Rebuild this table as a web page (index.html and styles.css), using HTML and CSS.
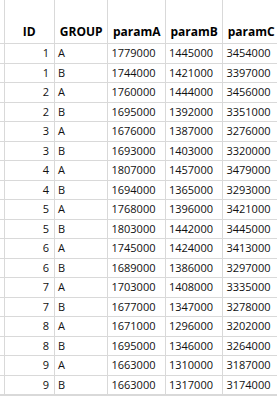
FILE: index.html
```html
<!DOCTYPE html>
<html>
<head>
<meta charset="utf-8">
<link rel="stylesheet" href="styles.css">
</head>
<body>
<table class="grid">
  <colgroup>
    <col class="c-stub"><col class="c-id"><col class="c-group"><col class="c-a"><col class="c-b"><col class="c-c">
  </colgroup>
  <thead>
    <tr><th class="stub"></th><th>ID</th><th>GROUP</th><th>paramA</th><th>paramB</th><th>paramC</th></tr>
  </thead>
  <tbody>
    <tr><td class="stub"></td><td class="num">1</td><td>A</td><td>1779000</td><td>1445000</td><td>3454000</td></tr>
    <tr><td class="stub"></td><td class="num">1</td><td>B</td><td>1744000</td><td>1421000</td><td>3397000</td></tr>
    <tr><td class="stub"></td><td class="num">2</td><td>A</td><td>1760000</td><td>1444000</td><td>3456000</td></tr>
    <tr><td class="stub"></td><td class="num">2</td><td>B</td><td>1695000</td><td>1392000</td><td>3351000</td></tr>
    <tr><td class="stub"></td><td class="num">3</td><td>A</td><td>1676000</td><td>1387000</td><td>3276000</td></tr>
    <tr><td class="stub"></td><td class="num">3</td><td>B</td><td>1693000</td><td>1403000</td><td>3320000</td></tr>
    <tr><td class="stub"></td><td class="num">4</td><td>A</td><td>1807000</td><td>1457000</td><td>3479000</td></tr>
    <tr><td class="stub"></td><td class="num">4</td><td>B</td><td>1694000</td><td>1365000</td><td>3293000</td></tr>
    <tr><td class="stub"></td><td class="num">5</td><td>A</td><td>1768000</td><td>1396000</td><td>3421000</td></tr>
    <tr><td class="stub"></td><td class="num">5</td><td>B</td><td>1803000</td><td>1442000</td><td>3445000</td></tr>
    <tr><td class="stub"></td><td class="num">6</td><td>A</td><td>1745000</td><td>1424000</td><td>3413000</td></tr>
    <tr><td class="stub"></td><td class="num">6</td><td>B</td><td>1689000</td><td>1386000</td><td>3297000</td></tr>
    <tr><td class="stub"></td><td class="num">7</td><td>A</td><td>1703000</td><td>1408000</td><td>3335000</td></tr>
    <tr><td class="stub"></td><td class="num">7</td><td>B</td><td>1677000</td><td>1347000</td><td>3278000</td></tr>
    <tr><td class="stub"></td><td class="num">8</td><td>A</td><td>1671000</td><td>1296000</td><td>3202000</td></tr>
    <tr><td class="stub"></td><td class="num">8</td><td>B</td><td>1695000</td><td>1346000</td><td>3264000</td></tr>
    <tr><td class="stub"></td><td class="num">9</td><td>A</td><td>1663000</td><td>1310000</td><td>3187000</td></tr>
    <tr><td class="stub"></td><td class="num">9</td><td>B</td><td>1663000</td><td>1317000</td><td>3174000</td></tr>
    <tr class="empty"><td class="stub"></td><td></td><td></td><td></td><td></td><td></td></tr>
  </tbody>
</table>
</body>
</html>
```
FILE: styles.css
```css
html, body {
  margin: 0;
  padding: 0;
  background: #ffffff;
  overflow: hidden;
}
.grid {
  border-collapse: collapse;
  table-layout: fixed;
  width: 280px;
  font-family: "Open Sans", "Noto Sans", sans-serif;
  font-size: 11px;
  color: #111111;
  margin-top: -1px;
}
.c-stub { width: 4px; }
.c-id { width: 50px; }
.c-group { width: 53px; }
.c-a { width: 57px; }
.c-b { width: 57px; }
.c-c { width: 56px; }
.grid th, .grid td {
  border: 1px solid #d9d9d9;
  white-space: nowrap;
  overflow: hidden;
}
.grid th {
  height: 40px;
  padding: 0 1px 3px;
  vertical-align: bottom;
  font-weight: 700;
  text-align: center;
  font-size: 12px;
  line-height: 16px;
  color: #000000;
}
.grid td {
  padding: 0 3px;
  line-height: 18.5px;
  text-align: left;
  vertical-align: middle;
}
.grid td.num {
  text-align: right;
  padding-right: 5px;
}
.grid .stub {
  padding: 0;
  border-left: none;
}
.grid tr.empty td {
  line-height: 20px;
}
```
